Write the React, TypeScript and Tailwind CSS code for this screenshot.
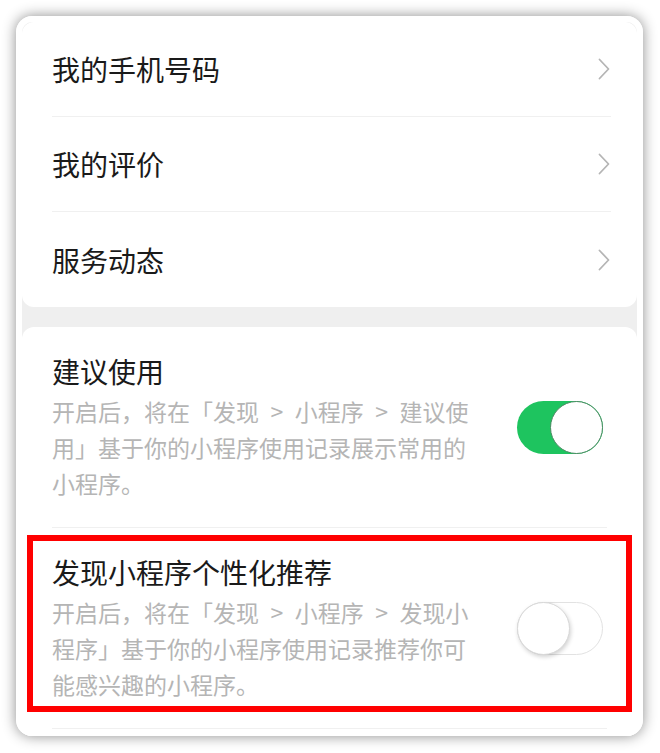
import React from 'react'

const font = { fontFamily: '"Noto Sans CJK SC", "Noto Sans", sans-serif' }

function Chevron() {
  return (
    <svg width="14" height="24" viewBox="0 0 14 24" fill="none">
      <path d="M2.5 2.5 L11.5 12 L2.5 21.5" stroke="#b5b5b5" strokeWidth="1.8" strokeLinecap="round" strokeLinejoin="round" />
    </svg>
  )
}

function Toggle({ on }: { on: boolean }) {
  if (on) {
    return (
      <div className="relative h-[53px] w-[86px] shrink-0 rounded-full bg-[#1ec45f]">
        <div className="absolute right-0 top-0 h-[53px] w-[53px] rounded-full border-[1.5px] border-[#4a8a62] bg-white" />
      </div>
    )
  }
  return (
    <div className="relative h-[53px] w-[86px] shrink-0 rounded-full border border-[#e2e2e2] bg-white">
      <div className="absolute left-[-1px] top-[-1px] h-[53px] w-[53px] rounded-full border border-[#d8d8d8] bg-white shadow-[1px_2px_4px_rgba(0,0,0,0.18)]" />
    </div>
  )
}

const links = ['我的手机号码', '我的评价', '服务动态']

// en spaces round the ">" so the breadcrumbs take the reference's width
const sep = '\u2002>\u2002'

function SwitchItem({ title, desc, on, marked }: { title: string; desc: string; on: boolean; marked?: boolean }) {
  return (
    <div className="relative flex items-center justify-between pb-[26px] pl-[30px] pr-[34px] pt-[26px]">
      <div className="w-[424px]">
        <div className="text-[28px] leading-[36px] text-[#1a1a1a]">{title}</div>
        <div className="mt-[4px] text-[23px] leading-[36px] text-[#b5b5b5]">{desc}</div>
      </div>
      <Toggle on={on} />
      {marked && <div className="absolute bottom-[16px] left-[5px] right-[5px] top-[7px] border-[6px] border-[#ff0000]" />}
    </div>
  )
}

export default function App() {
  return (
    <div className="min-h-[753px] bg-white pb-[17px] pl-[16px] pr-[17px] pt-[16px]" style={font}>
      <div className="h-[720px] overflow-hidden rounded-[16px] bg-[#efefef] shadow-[0_0_14px_rgba(0,0,0,0.45)] ring-[6px] ring-inset ring-white">
        <div className="flex flex-col gap-[20px] p-[6px]">
          <div className="rounded-[12px] bg-white px-[30px]">
            {links.map((t, i) => (
              <div key={t} className={'flex h-[95px] items-center justify-between -mr-[4px] ' + (i < links.length - 1 ? 'border-b border-[#f0f0f0]' : '')}>
                <span className="text-[28px] text-[#1a1a1a]">{t}</span>
                <Chevron />
              </div>
            ))}
          </div>
          <div className="rounded-[12px] bg-white">
            <div className="mx-[30px] border-b border-[#f0f0f0]">
              <div className="-mx-[30px]">
                <SwitchItem
                  title="建议使用"
                  desc={`开启后，将在「发现${sep}小程序${sep}建议使用」基于你的小程序使用记录展示常用的小程序。`}
                  on
                />
              </div>
            </div>
            <div className="mx-[30px] border-b border-[#f0f0f0]">
              <div className="-mx-[30px]">
                <SwitchItem
                  title="发现小程序个性化推荐"
                  desc={`开启后，将在「发现${sep}小程序${sep}发现小程序」基于你的小程序使用记录推荐你可能感兴趣的小程序。`}
                  on={false}
                  marked
                />
              </div>
            </div>
            <div className="h-[20px]" />
          </div>
        </div>
      </div>
    </div>
  )
}
